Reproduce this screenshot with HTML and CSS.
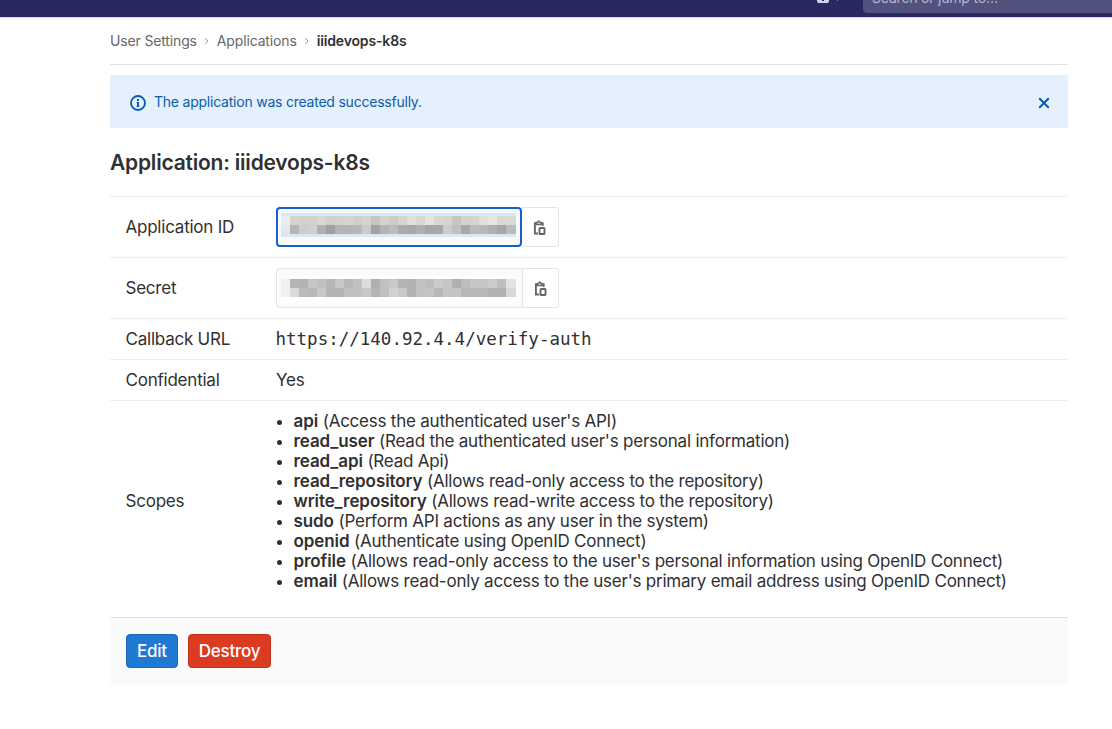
FILE: index.html
```html
<!DOCTYPE html>
<html lang="en">
<head>
<meta charset="utf-8">
<title>iiidevops-k8s · Applications · User Settings</title>
<link rel="stylesheet" href="styles.css">
</head>
<body>
<header class="navbar">
  <span class="nav-plus"><svg width="12" height="12" viewBox="0 0 12 12"><rect width="12" height="12" rx="2" fill="#d1d1f0"/><path d="M6 2.500v7.500M2.500 6h7" stroke="#292961" stroke-width="2"/></svg></span>
  <svg class="nav-caret" width="7" height="5" viewBox="0 0 7 5"><path d="M.5.5l3 3 3-3" fill="none" stroke="#9a9ac4"/></svg>
  <div class="search">Search or jump to…</div>
</header>
<main class="content">
  <nav class="breadcrumbs">
    <span>User Settings</span>
    <svg class="sep" width="5" height="8" viewBox="0 0 5 8"><path d="M1 1l3 3-3 3" fill="none" stroke="#999"/></svg>
    <span>Applications</span>
    <svg class="sep" width="5" height="8" viewBox="0 0 5 8"><path d="M1 1l3 3-3 3" fill="none" stroke="#999"/></svg>
    <strong>iiidevops-k8s</strong>
  </nav>
  <div class="alert">
    <svg width="16" height="16" viewBox="0 0 16 16"><circle cx="8" cy="8" r="7" fill="none" stroke="#0b5cad" stroke-width="1.8"/><path d="M7 4h2v2H7zM6.500 7H9v4h.5v1h-3v-1H7V8h-.5z" fill="#0b5cad"/></svg>
    <span class="alert-text">The application was created successfully.</span>
    <svg class="close" width="12" height="12" viewBox="0 0 12 12"><path d="M1.800 1.800l8.400 8.400M10.200 1.800l-8.400 8.400" stroke="#0b5cad" stroke-width="2" stroke-linecap="round"/></svg>
  </div>
  <h1>Application: iiidevops-k8s</h1>
  <div class="table">
    <div class="row tall"><div class="label">Application ID</div>
      <div class="group"><div class="field focused"><svg class="mask" id="app-id" width="235" height="24" viewBox="0 0 235 24"></svg></div><button class="copy" aria-label="Copy ID"><svg width="14" height="16" viewBox="0 0 14 16"><use href="#clip"/></svg></button></div></div>
    <div class="row tall"><div class="label">Secret</div>
      <div class="group"><div class="field"><svg class="mask" id="secret" width="235" height="30" viewBox="0 0 235 30"></svg></div><button class="copy" aria-label="Copy secret"><svg width="14" height="16" viewBox="0 0 14 16"><g id="clip" fill="none" stroke="#666"><path d="M4 3.200H1.900v10.300H5" stroke-width="1.900"/><path d="M8 3.200h1.700V6" stroke-width="1.900"/><path d="M3.600 4.500V2.500h1L5.800 1 7 2.500h1v2z" stroke-width="1.400"/><rect x="6.500" y="8" width="5" height="6" rx=".6" stroke-width="1.900"/></g></svg></button></div></div>
    <div class="row"><div class="label">Callback URL</div><div class="mono">https://140.92.4.4/verify-auth</div></div>
    <div class="row"><div class="label">Confidential</div><div>Yes</div></div>
    <div class="row scopes"><div class="label">Scopes</div>
      <ul>
        <li><b>api</b> (Access the authenticated user's API)</li>
        <li><b>read_user</b> (Read the authenticated user's personal information)</li>
        <li><b>read_api</b> (Read Api)</li>
        <li><b>read_repository</b> (Allows read-only access to the repository)</li>
        <li><b>write_repository</b> (Allows read-write access to the repository)</li>
        <li><b>sudo</b> (Perform API actions as any user in the system)</li>
        <li><b>openid</b> (Authenticate using OpenID Connect)</li>
        <li><b>profile</b> (Allows read-only access to the user's personal information using OpenID Connect)</li>
        <li><b>email</b> (Allows read-only access to the user's primary email address using OpenID Connect)</li>
      </ul></div>
  </div>
  <div class="actions"><button class="btn edit">Edit</button><button class="btn destroy">Destroy</button></div>
</main>
<script src="mask.js"></script>
</body>
</html>
```
FILE: styles.css
```css
* { box-sizing: border-box; }
body { margin: 0; background: #fff; color: #303030; font-family: Inter, "Liberation Sans", sans-serif; font-size: 17px; line-height: 20px; letter-spacing: -.225px; overflow: hidden; }
.navbar { height: 18px; background: #292961; border-bottom: 1px solid #dcdce8; display: flex; align-items: flex-end; justify-content: flex-end; overflow: hidden; }
.nav-plus { height: 26px; display: flex; }
.nav-caret { margin: 0 22px 15px 5px; }
.search { width: 249px; height: 34px; margin-bottom: 4px; background: #53527f; border-radius: 4px 0 0 4px; color: #b5b5d4; font-size: 14px; line-height: 38px; letter-spacing: -.2px; padding-left: 9px; flex: none; }
.content { width: 958px; margin-left: 110px; }
.breadcrumbs { height: 47px; border-bottom: 1px solid #e1e1e1; display: flex; align-items: center; font-size: 14px; color: #666; letter-spacing: -.15px; }
.breadcrumbs strong { color: #303030; font-weight: 600; }
.sep { margin: 0 8px 0 7px; }
.alert { margin-top: 10px; height: 53px; background: #e4f0fb; color: #0b5cad; font-size: 14px; display: flex; align-items: center; padding: 2px 18px 0 20px; }
.alert-text { margin-left: 8px; flex: 1; margin-top: -2px; }
h1 { margin: 21px 0 20px; font-size: 21px; line-height: 27px; font-weight: 600; letter-spacing: -.21px; }
.row { height: 41px; border-top: 1px solid #eee; padding-left: 16px; display: flex; align-items: center; }
.tall { height: 61px; }
.scopes { height: 217px; padding-bottom: 16px; }
.label { width: 150px; flex: none; text-indent: -.5px; }
.mono { font-family: "DejaVu Sans Mono", monospace; font-size: 17.5px; letter-spacing: 0; text-indent: -.5px; }
.group { display: flex; }
.field { width: 247px; height: 40px; border: 1px solid #e4e4e4; border-radius: 4px 0 0 4px; background: #fafafa; padding: 6px 0 0 4px; }
.focused { width: 246px; border: 2px solid #1560cc; border-radius: 4px; padding: 4px 0 0 3px; }
.focused + .copy { width: 37px; }
.mask { display: block; }
.copy { width: 36px; height: 40px; background: #fff; border: 1px solid #e4e4e4; border-left: 0; border-radius: 0 4px 4px 0; padding: 2px 0 0; display: flex; align-items: center; justify-content: center; }
ul { margin: 0; padding-left: 17.5px; white-space: nowrap; }
li { height: 20px; }
b { font-weight: 600; letter-spacing: -.08px; }
.actions { height: 67px; background: #fafafa; border-top: 1px solid #e1e1e1; padding: 16px; display: flex; gap: 10px; }
.btn { height: 34px; border: 1px solid; border-radius: 4px; color: #fff; font: 500 17px/20px Inter, sans-serif; letter-spacing: -.25px; padding: 0; }
.edit { width: 52px; background: #1f78d1; border-color: #1b69b6; }
.destroy { width: 83px; background: #db3b21; border-color: #c0341d; }
```
FILE: mask.js
```js
// Paints the mosaic that hides each credential.
function paint(id, top, rows, under) {
  var svg = document.getElementById(id);
  function rect(x, y, w, h, fill) {
    var r = document.createElementNS("http://www.w3.org/2000/svg", "rect");
    r.setAttribute("x", x); r.setAttribute("y", y);
    r.setAttribute("width", w); r.setAttribute("height", h);
    r.setAttribute("fill", fill); svg.appendChild(r);
  }
  rect(0, 0, 235, 24 + (id === "secret" ? 6 : 0), under);
  rows.forEach(function (row, j) {
    row.split(" ").forEach(function (c, i) {
      rect(i * 9, top + j * 9, i === 25 ? 10 : 9, 9, "#" + (c.length === 2 ? c + c + c : c));
    });
  });
}
paint("app-id", 3, [
  "e9eef2 d6d3cb d4d1cb d4d1cb d8d7d4 cfcfcd d2d1cf d4d4d2 cfcfcf d4d3d0 c6c5c3 d2d2d0 cccbc8 d6d5d2 e0dfdc d8d7d3 e4e3df d8d7d2 d6d5d0 c8c5c0 d4d2ce d6d4d0 e0dfdb e6e5e2 d8d8d4 dcdad6",
  "e4e8ec b5 cd d0 b0 a0 b4 b4 b8 cb a2 b4 bc ac a8 b0 a5 a8 cc c0 a8 bc b8 b0 a6 bc"
], "#dbe6f7");
paint("secret", 4, [
  "f0 b5 b3 c6 c0 b6 c8 b8 c2 dd b0 c0 c8 b4 b2 c2 be cc c6 b0 bd c6 c6 cb bf e2",
  "f0 da bb b8 c8 b5 b3 bf c0 c8 b5 c0 d2 c8 b2 c2 c4 b8 c4 c4 b8 b8 b8 b2 b2 d8"
], "#fdfdfd");
```
